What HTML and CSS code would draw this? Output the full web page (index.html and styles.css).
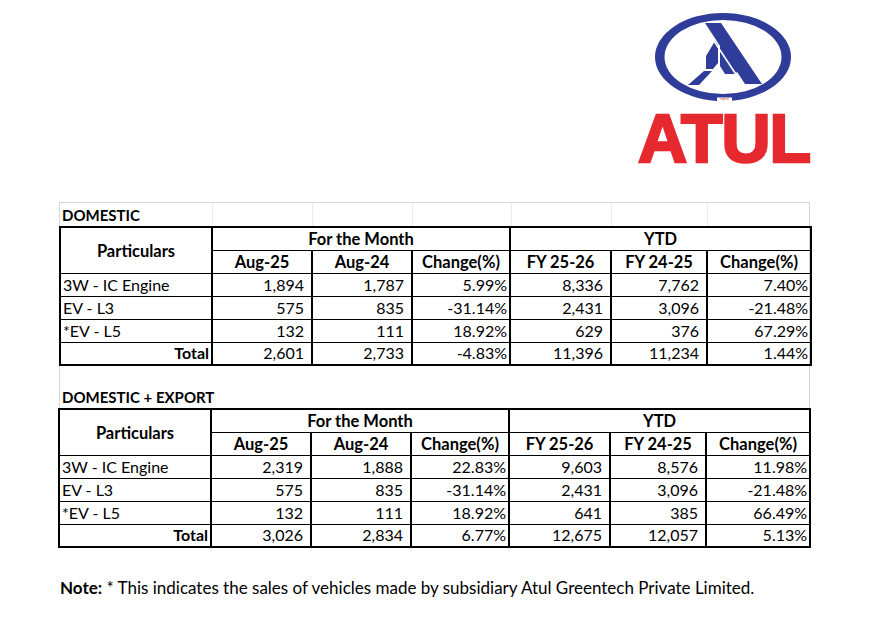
FILE: index.html
```html
<!DOCTYPE html>
<html lang="en">
<head>
<meta charset="utf-8">
<title>Atul Auto - Sales August 2025</title>
<link rel="stylesheet" href="styles.css">
</head>
<body>
<header class="top">
  <div class="logo">
    <svg class="emblem" width="140" height="92" viewBox="654 11 140 92" aria-label="Atul emblem">
      <ellipse cx="724" cy="57" rx="68" ry="44" fill="#2f3c99"/>
      <ellipse cx="724" cy="57" rx="58.5" ry="37" fill="#ffffff"/>
      <polygon points="706,23 722,23 763,84 746,84" fill="#2f3c99"/>
      <polygon points="721,44 739,71 736,74 726,74 721,66" fill="#2f3c99"/>
      <polygon points="716,41 719,45 719,63 714,69 707,69 707,56" fill="#2f3c99"/>
      <polygon points="705,71 713,71 700,85 689,85" fill="#2f3c99"/>
      <line x1="713" y1="38" x2="742" y2="82" stroke="#ffffff" stroke-width="1.6"/>
      <rect x="718" y="97.5" width="15" height="3.5" fill="#ffffff"/>
      <text x="725.5" y="100.3" class="regd">regd tm</text>
    </svg>
    <div class="brand">ATUL</div>
  </div>
</header>

<main class="content">
  <section class="sheet">
    <div class="label-row">
      <span class="label">DOMESTIC</span>
      <span class="grid g1"></span><span class="grid g2"></span><span class="grid g3"></span><span class="grid g4"></span><span class="grid g5"></span><span class="grid g6"></span>
    </div>
    <table class="sales">
      <colgroup>
        <col class="c-part"><col class="c-a"><col class="c-b"><col class="c-c"><col class="c-d"><col class="c-e"><col class="c-f">
      </colgroup>
      <thead>
        <tr class="h1">
          <th rowspan="2" class="part">Particulars</th>
          <th colspan="3">For the Month</th>
          <th colspan="3">YTD</th>
        </tr>
        <tr class="h2">
          <th>Aug-25</th><th>Aug-24</th><th>Change(%)</th>
          <th>FY 25-26</th><th>FY 24-25</th><th>Change(%)</th>
        </tr>
      </thead>
      <tbody>
        <tr><td class="name">3W - IC Engine</td><td class="num">1,894</td><td class="num">1,787</td><td class="pct">5.99%</td><td class="num">8,336</td><td class="num">7,762</td><td class="pct">7.40%</td></tr>
        <tr><td class="name">EV - L3</td><td class="num">575</td><td class="num">835</td><td class="pct">-31.14%</td><td class="num">2,431</td><td class="num">3,096</td><td class="pct">-21.48%</td></tr>
        <tr><td class="name">*EV - L5</td><td class="num">132</td><td class="num">111</td><td class="pct">18.92%</td><td class="num">629</td><td class="num">376</td><td class="pct">67.29%</td></tr>
        <tr class="total"><td class="name">Total</td><td class="num">2,601</td><td class="num">2,733</td><td class="pct">-4.83%</td><td class="num">11,396</td><td class="num">11,234</td><td class="pct">1.44%</td></tr>
      </tbody>
    </table>
    <div class="spacer"></div>
    <div class="label-row">
      <span class="label">DOMESTIC + EXPORT</span>
    </div>
  </section>

  <table class="sales">
    <colgroup>
      <col class="c-part"><col class="c-a"><col class="c-b"><col class="c-c"><col class="c-d"><col class="c-e"><col class="c-f">
    </colgroup>
    <thead>
      <tr class="h1">
        <th rowspan="2" class="part">Particulars</th>
        <th colspan="3">For the Month</th>
        <th colspan="3">YTD</th>
      </tr>
      <tr class="h2">
        <th>Aug-25</th><th>Aug-24</th><th>Change(%)</th>
        <th>FY 25-26</th><th>FY 24-25</th><th>Change(%)</th>
      </tr>
    </thead>
    <tbody>
      <tr><td class="name">3W - IC Engine</td><td class="num">2,319</td><td class="num">1,888</td><td class="pct">22.83%</td><td class="num">9,603</td><td class="num">8,576</td><td class="pct">11.98%</td></tr>
      <tr><td class="name">EV - L3</td><td class="num">575</td><td class="num">835</td><td class="pct">-31.14%</td><td class="num">2,431</td><td class="num">3,096</td><td class="pct">-21.48%</td></tr>
      <tr><td class="name">*EV - L5</td><td class="num">132</td><td class="num">111</td><td class="pct">18.92%</td><td class="num">641</td><td class="num">385</td><td class="pct">66.49%</td></tr>
      <tr class="total"><td class="name">Total</td><td class="num">3,026</td><td class="num">2,834</td><td class="pct">6.77%</td><td class="num">12,675</td><td class="num">12,057</td><td class="pct">5.13%</td></tr>
    </tbody>
  </table>

  <p class="note"><b>Note:</b> * This indicates the sales of vehicles made by subsidiary Atul Greentech Private Limited.</p>
</main>
</body>
</html>
```

FILE: styles.css
```css
* { box-sizing: border-box; }

html, body {
  margin: 0;
  padding: 0;
  background: #ffffff;
  color: #000000;
  font-family: Lato, "Open Sans", "Liberation Sans", sans-serif;
}

.top {
  display: flex;
  justify-content: flex-end;
  padding: 11px 57px 0 0;
  height: 202px;
}

.logo {
  width: 184px;
  display: flex;
  flex-direction: column;
  align-items: center;
}

.emblem {
  display: block;
  margin-left: 0;
}

.regd {
  font-family: "Liberation Sans", sans-serif;
  font-size: 2.6px;
  fill: #d8322f;
  text-anchor: middle;
}

.brand {
  font-family: "Liberation Sans", Arial, sans-serif;
  font-weight: 700;
  font-size: 68px;
  line-height: 68px;
  color: #e6292f;
  letter-spacing: -1px;
  -webkit-text-stroke: 2.5px #e6292f;
  margin-top: 1px;
  padding-left: 2px;
}

.content {
  padding: 0 0 0 59px;
  width: 812px;
}

.sheet {
  border: 1px solid #d6d6d6;
  border-bottom: none;
  width: 751px;
}

.label-row {
  position: relative;
  height: 23px;
}

.label {
  display: block;
  font-weight: 700;
  font-size: 15px;
  line-height: 23px;
  padding: 1px 0 0 2px;
}

.grid {
  position: absolute;
  top: 0;
  bottom: 0;
  width: 1px;
  background: #ececec;
}
.g1 { left: 152px; }
.g2 { left: 252px; }
.g3 { left: 352px; }
.g4 { left: 451px; }
.g5 { left: 551px; }
.g6 { left: 647px; }

.spacer { height: 19px; }

table.sales {
  border-collapse: collapse;
  table-layout: fixed;
  width: 751px;
  font-size: 16px;
  margin-left: -1px;
}

.c-part { width: 152px; }
.c-a { width: 100px; }
.c-b { width: 100px; }
.c-c { width: 98px; }
.c-d { width: 101px; }
.c-e { width: 96px; }
.c-f { width: 104px; }

.sales th,
.sales td {
  border-top: 1px solid #000;
  border-bottom: 1px solid #000;
  border-left: 2px solid #000;
  border-right: 2px solid #000;
  height: 23px;
  padding: 0;
  line-height: 20px;
  white-space: nowrap;
  vertical-align: middle;
}

.sales thead tr.h1 th {
  border-top: 2px solid #000;
}

.sales tbody tr.total td {
  border-bottom: 2px solid #000;
}

.sales th {
  font-weight: 700;
  font-size: 16.5px;
  text-align: center;
  padding-top: 1px;
}

.sales th.part {
  padding-top: 2px;
}

.sales td.name {
  text-align: left;
  padding-left: 2px;
}

.sales tr.total td.name {
  text-align: right;
  font-weight: 700;
  padding-right: 2px;
}

.sales td.num {
  text-align: right;
  padding-right: 7px;
}

.sales td.pct {
  text-align: right;
  padding-right: 2px;
}

.note {
  margin: 29px 0 0 1px;
  font-size: 17px;
}
```
